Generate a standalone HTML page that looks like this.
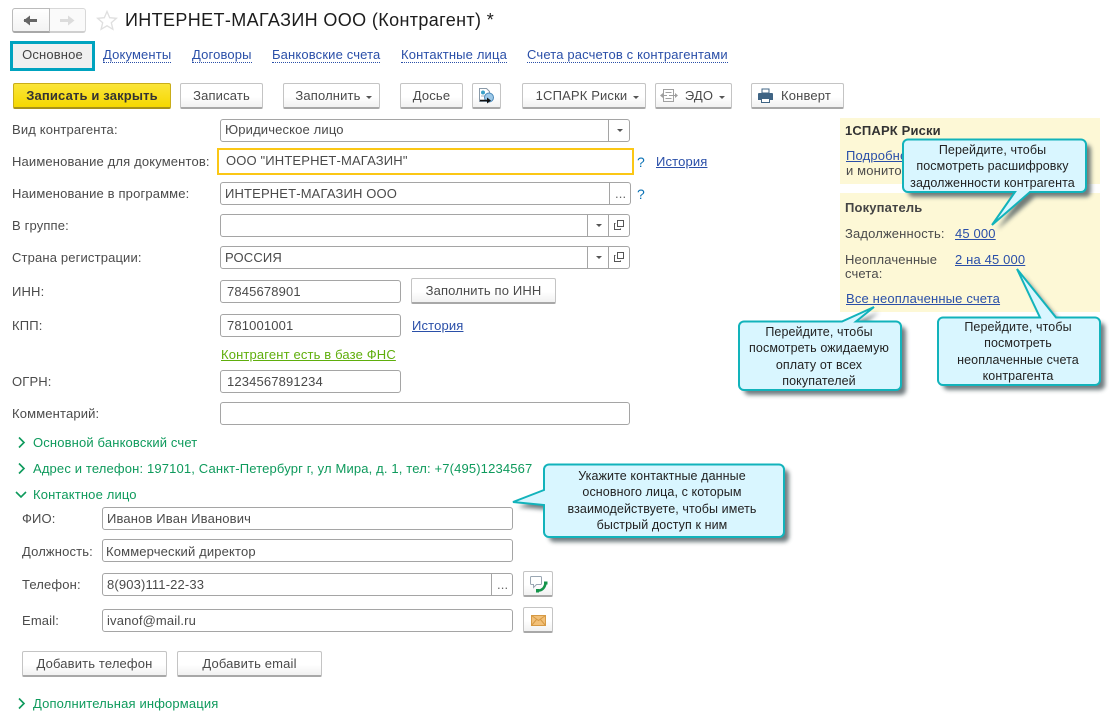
<!DOCTYPE html>
<html lang="ru"><head><meta charset="utf-8"><title>ИНТЕРНЕТ-МАГАЗИН ООО</title>
<style>
html,body{margin:0;padding:0;background:#fff}
#p{position:relative;width:1109px;height:713px;overflow:hidden;background:#fff;font:13px/14px "Liberation Sans",Arial,sans-serif;color:#4b4b4b;letter-spacing:.15px}
#p div,#p span.a,#p a{position:absolute;white-space:nowrap}
a{color:#2a4fa8;text-decoration:underline}
.l{height:14px}
.f{box-sizing:border-box;height:23px;border:1px solid #a5a5a5;border-radius:3px;background:#fff;padding:0 0 0 4px;line-height:20px;color:#4a4a4a}
.u{padding-top:1px}
.d{top:0;bottom:0;width:1px;background:#a5a5a5}
.b{box-sizing:border-box;height:26px;border:1px solid #c4c4c4;border-bottom:2px solid #a8a8a8;border-radius:2px;background:linear-gradient(#fff,#fff 55%,#f1f1f1);text-align:center;line-height:23px;color:#4a4a4a}
.g{color:#0e9a5c}
.t{width:0;height:0;border-left:3px solid transparent;border-right:3px solid transparent;border-top:3px solid #555}
.n{color:#2a4fa8;text-decoration:none;border-bottom:1px dotted #2a4fa8;height:14px}
.c{color:#222;text-align:center;line-height:16.300px;font-size:12.500px;letter-spacing:.1px}
svg{position:absolute;overflow:visible}
</style></head><body><div id="p">

<div style="left:12px;top:8px;width:74px;height:25px;box-sizing:border-box;border:1px solid #d8d8d8;border-bottom:2px solid #cfcfcf;border-radius:3px;background:#fafafa"></div>
<div style="left:12px;top:8px;width:38px;height:25px;box-sizing:border-box;border:1px solid #bbb;border-bottom:2px solid #a8a8a8;border-radius:3px 0 0 3px;background:linear-gradient(#fff,#f3f3f3)"></div>
<svg style="left:0;top:0" width="130" height="40"><path d="M24 20.500h13" stroke="#666" stroke-width="3"/><path d="M30 15.500l-6.500 5 6.500 5z" fill="#666"/><path d="M60 20.500h12" stroke="#dcdcdc" stroke-width="3"/><path d="M68 15.500l6.500 5-6.500 5z" fill="#dcdcdc"/><path d="M107 11.500l2.700 6.200 6.700.6-5.100 4.400 1.600 6.600-5.900-3.500-5.900 3.500 1.600-6.600-5.100-4.400 6.700-.6z" fill="#fff" stroke="#dfdfdf" stroke-width="1.300"/></svg>
<div style="left:125px;top:9px;font-size:18px;line-height:22px;color:#1c1c1c;letter-spacing:.37px">ИНТЕРНЕТ-МАГАЗИН ООО (Контрагент) *</div>

<div style="left:10px;top:41px;width:85px;height:30px;box-sizing:border-box;border:3px solid #00a3bf;background:#f0f0f0;text-align:center;line-height:22px;color:#444">Основное</div>
<a class="n" style="left:103px;top:48px">Документы</a>
<a class="n" style="left:192px;top:48px">Договоры</a>
<a class="n" style="left:272px;top:48px">Банковские счета</a>
<a class="n" style="left:401px;top:48px">Контактные лица</a>
<a class="n" style="left:527px;top:48px">Счета расчетов с контрагентами</a>

<div class="b" style="left:13px;top:83px;width:158px;background:linear-gradient(#fbe53a,#f5d800);border-color:#c9ad1a;border-bottom-color:#a8921a;color:#333;font-weight:bold">Записать и закрыть</div>
<div class="b" style="left:180px;top:83px;width:83px">Записать</div>
<div class="b" style="left:283px;top:83px;width:97px;padding-right:7px">Заполнить<div class="t" style="left:82px;top:12px"></div></div>
<div class="b" style="left:400px;top:83px;width:63px">Досье</div>
<div class="b" style="left:472px;top:83px;width:29px"></div>
<svg style="left:472px;top:83px" width="29" height="26"><path d="M7.500 5.500h7l3 3v10h-10z" fill="#fff" stroke="#8a9aa8"/><circle cx="11" cy="9.500" r="2" fill="#3aa0c8"/><path d="M9 13h5" stroke="#a0b0c0"/><circle cx="17" cy="14.500" r="4.500" fill="#9cc8e8" stroke="#4a88b8"/><path d="M8 17.500h9" stroke="#111" stroke-width="1.500"/><path d="M15 14.500l4 3-4 3z" fill="#111"/></svg>
<div class="b" style="left:522px;top:83px;width:124px;padding-right:5px">1СПАРК Риски<div class="t" style="left:110px;top:12px"></div></div>
<div class="b" style="left:655px;top:83px;width:77px;padding-left:17px;padding-right:6px">ЭДО<div class="t" style="left:63px;top:12px"></div></div>
<svg style="left:655px;top:83px" width="26" height="26"><g fill="none" stroke="#a0a0a0"><path d="M8.500 6.500h10v12h-10z"/><path d="M10.500 9.500h6M10.500 15.500h6M6 12.500h6M14 12.500h8"/></g><path d="M5 12.500l3-2.500v5zM23 12.500l-3-2.500v5z" fill="#a0a0a0"/></svg>
<div class="b" style="left:751px;top:83px;width:93px;padding-left:17px">Конверт</div>
<svg style="left:751px;top:83px" width="24" height="26"><path d="M11 6h7v4h-7z" fill="#fff" stroke="#3f6484"/><path d="M8 10h13a1 1 0 0 1 1 1v6h-3v-2h-9v2H7v-6a1 1 0 0 1 1-1z" fill="#3f6484"/><path d="M10.500 15.500h8v4h-8z" fill="#fff" stroke="#3f6484"/></svg>

<div class="l" style="left:12px;top:123px">Вид контрагента:</div>
<div class="f" style="left:220px;top:119px;width:410px">Юридическое лицо<div class="d" style="left:387px"></div><div class="t" style="left:396px;top:9px"></div></div>

<div class="l" style="left:12px;top:155px">Наименование для документов:</div>
<div class="f" style="left:217px;top:148px;width:417px;height:27px;border:2px solid #fbc715;border-radius:0;padding-left:7px;line-height:22px">ООО "ИНТЕРНЕТ-МАГАЗИН"</div>
<div style="left:637px;top:155px;color:#0b72b5;font-size:14px">?</div>
<a style="left:656px;top:155px">История</a>

<div class="l" style="left:12px;top:187px">Наименование в программе:</div>
<div class="f u" style="left:220px;top:182px;width:411px">ИНТЕРНЕТ-МАГАЗИН ООО<div class="d" style="left:388px"></div><div style="left:394px;top:1px;color:#666">...</div></div>
<div style="left:637px;top:187px;color:#0b72b5;font-size:14px">?</div>

<div class="l" style="left:12px;top:219px">В группе:</div>
<div class="f" style="left:220px;top:214px;width:410px"><div class="d" style="left:366px"></div><div class="t" style="left:375px;top:9px"></div><div class="d" style="left:387px"></div><svg style="left:393px;top:5px" width="11" height="11"><rect x="3.500" y=".5" width="6" height="6" fill="none" stroke="#555"/><path d="M1.500 3.500h-1v6h6v-1" fill="none" stroke="#555"/></svg></div>

<div class="l" style="left:12px;top:251px">Страна регистрации:</div>
<div class="f u" style="left:220px;top:246px;width:410px">РОССИЯ<div class="d" style="left:366px"></div><div class="t" style="left:375px;top:9px"></div><div class="d" style="left:387px"></div><svg style="left:393px;top:5px" width="11" height="11"><rect x="3.500" y=".5" width="6" height="6" fill="none" stroke="#555"/><path d="M1.500 3.500h-1v6h6v-1" fill="none" stroke="#555"/></svg></div>

<div class="l" style="left:12px;top:285px">ИНН:</div>
<div class="f u" style="left:220px;top:280px;width:181px;padding-left:6px">7845678901</div>
<div class="b" style="left:411px;top:278px;width:145px">Заполнить по ИНН</div>

<div class="l" style="left:12px;top:319px">КПП:</div>
<div class="f u" style="left:220px;top:314px;width:181px;padding-left:6px">781001001</div>
<a style="left:412px;top:319px">История</a>
<a style="left:221px;top:348px;color:#5fae0c">Контрагент есть в базе ФНС</a>

<div class="l" style="left:12px;top:375px">ОГРН:</div>
<div class="f u" style="left:220px;top:370px;width:181px;padding-left:6px">1234567891234</div>
<div class="l" style="left:12px;top:407px">Комментарий:</div>
<div class="f" style="left:220px;top:402px;width:410px"></div>

<svg style="left:0;top:430px" width="40" height="283" fill="none" stroke="#0e9a5c" stroke-width="1.600"><path d="M19 7.500l5 5-5 5M19 33.500l5 5-5 5M16 62l5 5 5-5M19 268.500l5 5-5 5"/></svg>
<div class="g" style="left:33px;top:436px">Основной банковский счет</div>
<div class="g" style="left:33px;top:462px">Адрес и телефон: 197101, Санкт-Петербург г, ул Мира, д. 1, тел: +7(495)1234567</div>
<div class="g" style="left:33px;top:488px">Контактное лицо</div>

<div class="l" style="left:22px;top:512px">ФИО:</div>
<div class="f u" style="left:102px;top:507px;width:411px">Иванов Иван Иванович</div>
<div class="l" style="left:22px;top:545px">Должность:</div>
<div class="f" style="left:102px;top:539px;width:411px;padding-left:3px;padding-top:2px">Коммерческий директор</div>
<div class="l" style="left:22px;top:578px">Телефон:</div>
<div class="f u" style="left:102px;top:573px;width:411px">8(903)111-22-33<div class="d" style="left:388px"></div><div style="left:394px;top:1px;color:#666">...</div></div>
<div class="l" style="left:22px;top:614px">Email:</div>
<div class="f u" style="left:102px;top:609px;width:411px">ivanof@mail.ru</div>

<div class="b" style="left:523px;top:571px;width:30px"></div>
<svg style="left:523px;top:571px" width="30" height="26"><path d="M8.500 5.500h9a1 1 0 0 1 1 1v6a1 1 0 0 1-1 1h-4l-3 3v-3h-2a1 1 0 0 1-1-1v-6a1 1 0 0 1 1-1z" fill="#fff" stroke="#9aa6b2"/><path d="M14.500 19.500C19 20 22 16.500 22.500 12" fill="none" stroke="#14944a" stroke-width="2.600"/><path d="M13 18h3v3.500h-3zM21 10.500h3.500v3H21z" fill="#14944a"/></svg>
<div class="b" style="left:523px;top:607px;width:30px"></div>
<svg style="left:523px;top:607px" width="30" height="26"><rect x="8.500" y="8.500" width="14" height="10" fill="#f2c078" stroke="#d69a45"/><path d="M8.500 8.500l7 5 7-5M8.500 18.500l5-6M22.500 18.500l-5-6" fill="none" stroke="#d69a45"/></svg>

<div class="b" style="left:22px;top:651px;width:145px">Добавить телефон</div>
<div class="b" style="left:177px;top:651px;width:145px">Добавить email</div>
<div class="g" style="left:33px;top:697px">Дополнительная информация</div>

<div style="left:840px;top:118px;width:260px;height:66px;background:#fdf8d6"></div>
<div style="left:840px;top:193px;width:260px;height:119px;background:#fdf8d6"></div>
<div style="left:845px;top:124px;font-weight:bold;color:#333">1СПАРК Риски</div>
<a style="left:846px;top:149px">Подробнее</a>
<div style="left:846px;top:164px">и мониторинг</div>
<div style="left:845px;top:201px;font-weight:bold;color:#444">Покупатель</div>
<div style="left:845px;top:227px">Задолженность:</div>
<a style="left:955px;top:227px">45 000</a>
<div style="left:845px;top:253px">Неоплаченные</div>
<div style="left:845px;top:267px">счета:</div>
<a style="left:955px;top:253px">2 на 45 000</a>
<a style="left:846px;top:292px">Все неоплаченные счета</a>

<svg style="left:0;top:0" width="1109" height="713">
<defs><filter id="s" x="-20%" y="-20%" width="140%" height="140%"><feGaussianBlur stdDeviation="2"/></filter></defs>
<g fill="#4d5b60" opacity=".8" filter="url(#s)" transform="translate(5 5)">
<path d="M908 139.500H1081a5 5 0 0 1 5 5V187a5 5 0 0 1-5 5H1030L992 225 1015 192H908a5 5 0 0 1-5-5V144.500a5 5 0 0 1 5-5z"/>
<path d="M744 321.500H842L874 307 856 321.500H896a5 5 0 0 1 5 5V385a5 5 0 0 1-5 5H744a5 5 0 0 1-5-5V326.500a5 5 0 0 1 5-5z"/>
<path d="M943 317.500H1040L1017 269 1056 317.500H1095a5 5 0 0 1 5 5V380a5 5 0 0 1-5 5H943a5 5 0 0 1-5-5V322.500a5 5 0 0 1 5-5z"/>
<path d="M549 464.500H779a5 5 0 0 1 5 5V532a5 5 0 0 1-5 5H549a5 5 0 0 1-5-5V505L513 502 544 490V469.500a5 5 0 0 1 5-5z"/>
</g>
<g fill="#d9f6ff" stroke="#12b3bb" stroke-width="2">
<path d="M908 139.500H1081a5 5 0 0 1 5 5V187a5 5 0 0 1-5 5H1030L992 225 1015 192H908a5 5 0 0 1-5-5V144.500a5 5 0 0 1 5-5z"/>
<path d="M744 321.500H842L874 307 856 321.500H896a5 5 0 0 1 5 5V385a5 5 0 0 1-5 5H744a5 5 0 0 1-5-5V326.500a5 5 0 0 1 5-5z"/>
<path d="M943 317.500H1040L1017 269 1056 317.500H1095a5 5 0 0 1 5 5V380a5 5 0 0 1-5 5H943a5 5 0 0 1-5-5V322.500a5 5 0 0 1 5-5z"/>
<path d="M549 464.500H779a5 5 0 0 1 5 5V532a5 5 0 0 1-5 5H549a5 5 0 0 1-5-5V505L513 502 544 490V469.500a5 5 0 0 1 5-5z"/>
</g></svg>
<div class="c" style="left:901px;top:142px;width:183px">Перейдите, чтобы<br>посмотреть расшифровку<br>задолженности контрагента</div>
<div class="c" style="left:738px;top:324px;width:162px">Перейдите, чтобы<br>посмотреть ожидаемую<br>оплату от всех<br>покупателей</div>
<div class="c" style="left:937px;top:319px;width:162px">Перейдите, чтобы<br>посмотреть<br>неоплаченные счета<br>контрагента</div>
<div class="c" style="left:542px;top:468px;width:240px">Укажите контактные данные<br>основного лица, с которым<br>взаимодействуете, чтобы иметь<br>быстрый доступ к ним</div>
</div></body></html>
